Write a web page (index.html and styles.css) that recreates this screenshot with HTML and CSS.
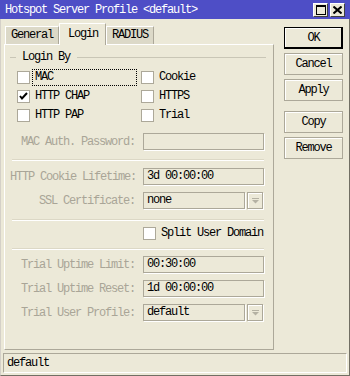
FILE: index.html
```html
<!DOCTYPE html>
<html>
<head>
<meta charset="utf-8">
<link rel="stylesheet" href="styles.css">
</head>
<body>
<div class="window">
  <div class="titlebar">
    <span class="title">Hotspot Server Profile &lt;default&gt;</span>
    <div class="tb-btns">
      <span class="tb-btn"><svg width="10" height="10" viewBox="0 0 10 10"><rect x="0.5" y="0.5" width="9" height="9" fill="none" stroke="#000"/><rect x="0" y="0" width="10" height="2" fill="#000"/></svg></span>
      <span class="tb-btn"><svg width="9" height="8" viewBox="0 0 9 8"><path d="M0.5 0.5 L8.5 7.5 M8.5 0.5 L0.5 7.5" stroke="#000" stroke-width="2" fill="none"/></svg></span>
    </div>
  </div>
  <div class="main">
    <div class="left">
      <div class="tabs">
        <div class="tab">General</div>
        <div class="tab active">Login</div>
        <div class="tab">RADIUS</div>
      </div>
      <div class="panel">
        <div class="group-title"><span class="gline short"></span><span class="gtext">Login By</span><span class="gline"></span></div>
        <div class="checks">
          <div class="check"><span class="box"></span><span class="clabel focus">MAC</span></div>
          <div class="check"><span class="box"></span><span class="clabel">Cookie</span></div>
          <div class="check"><span class="box"><svg width="11" height="11" viewBox="0 0 11 11"><path d="M2 5 L4 7.5 L9 2" stroke="#000" stroke-width="2" fill="none"/></svg></span><span class="clabel">HTTP CHAP</span></div>
          <div class="check"><span class="box"></span><span class="clabel">HTTPS</span></div>
          <div class="check"><span class="box"></span><span class="clabel">HTTP PAP</span></div>
          <div class="check"><span class="box"></span><span class="clabel">Trial</span></div>
        </div>
        <div class="row first"><span class="label">MAC Auth. Password:</span><span class="input"></span></div>
        <div class="sep"></div>
        <div class="row"><span class="label">HTTP Cookie Lifetime:</span><span class="input">3d 00:00:00</span></div>
        <div class="row"><span class="label">SSL Certificate:</span><span class="input select">none</span><span class="ddbtn"><svg width="7" height="6" viewBox="0 0 7 6"><rect x="0" y="0" width="7" height="1" fill="#b4b1a3"/><path d="M0 2 H7 L3.5 5.5 Z" fill="#b4b1a3"/></svg></span></div>
        <div class="sep s2"></div>
        <div class="split"><span class="box"></span><span class="clabel">Split User Domain</span></div>
        <div class="sep s3"></div>
        <div class="row trial"><span class="label">Trial Uptime Limit:</span><span class="input">00:30:00</span></div>
        <div class="row"><span class="label">Trial Uptime Reset:</span><span class="input">1d 00:00:00</span></div>
        <div class="row"><span class="label">Trial User Profile:</span><span class="input select">default</span><span class="ddbtn"><svg width="7" height="6" viewBox="0 0 7 6"><rect x="0" y="0" width="7" height="1" fill="#b4b1a3"/><path d="M0 2 H7 L3.5 5.5 Z" fill="#b4b1a3"/></svg></span></div>
      </div>
    </div>
    <div class="buttons">
      <div class="btn default">OK</div>
      <div class="btn">Cancel</div>
      <div class="btn">Apply</div>
      <div class="btn gap">Copy</div>
      <div class="btn">Remove</div>
    </div>
  </div>
  <div class="status">default</div>
</div>
</body>
</html>
```

FILE: styles.css
```css
* { box-sizing: border-box; }
html, body { margin: 0; padding: 0; }
body {
  width: 350px;
  height: 376px;
  background: #ece9d8;
  font-family: "Liberation Mono", "DejaVu Sans Mono", monospace;
  font-size: 12px;
  letter-spacing: -1.2px;
  color: #000;
  overflow: hidden;
}
.window {
  width: 350px;
  height: 376px;
  display: flex;
  flex-direction: column;
  border-right: 1px solid #716f64;
  border-bottom: 1px solid #716f64;
  border-left: 1px solid #d4d0c8;
  background: #ece9d8;
}
.titlebar {
  height: 19px;
  background: #4e4ec6;
  color: #fff;
  display: flex;
  align-items: center;
  padding-left: 5px;
  margin-left: -1px;
  margin-right: -1px;
}
.title { flex: 1; line-height: 19px; padding-top: 1px; }
.tb-btns { display: flex; gap: 2px; padding-right: 5px; }
.tb-btn {
  width: 15px;
  height: 14px;
  background: #ece9d8;
  border: 1px solid;
  border-color: #fff #404040 #404040 #fff;
  display: flex;
  align-items: center;
  justify-content: center;
}
.main {
  flex: 1;
  display: flex;
  padding: 4px 0 0 3px;
}
.left { width: 270px; display: flex; flex-direction: column; }
.tabs { display: flex; align-items: flex-end; height: 21px; padding-left: 1px; }
.tab {
  height: 18px;
  line-height: 16px;
  padding: 0 5px;
  background: #dcd9c8;
  border: 1px solid;
  border-color: #fff #aca899 transparent #fff;
  border-bottom: none;
}
.tab.active {
  height: 22px;
  margin-bottom: -1px;
  background: #ece9d8;
  padding: 2px 7px 0 8px;
  position: relative;
  z-index: 1;
  border-right-color: #aca899;
}
.panel {
  height: 306px;
  border: 1px solid;
  border-color: #fff #aca899 #aca899 #fff;
  padding: 6px 7px 0 5px;
}
.group-title {
  height: 12px;
  display: flex;
  align-items: center;
}
.gline { flex: 1; height: 1px; background: #c9c6b6; }
.gline.short { flex: 0 0 6px; }
.gtext { padding: 0 7px 0 6px; }
.checks {
  margin-top: 5px;
  display: grid;
  grid-template-columns: 124px 1fr;
  grid-auto-rows: 19px;
  padding-left: 7px;
}
.check { display: flex; align-items: center; }
.box {
  width: 13px;
  height: 13px;
  background: #fff;
  border: 1px solid #aca899;
  display: flex;
  align-items: center;
  justify-content: center;
  flex: none;
}
.clabel { margin-left: 5px; line-height: 15px; }
.clabel.focus {
  margin-left: 3px;
  padding-left: 2px;
  width: 103px;
  outline: 1px dotted #000;
}
.row {
  display: flex;
  align-items: center;
  height: 17px;
  margin-top: 7px;
}
.row.first { margin-top: 8px; }
.row.trial { margin-top: 6px; }
.label {
  width: 125px;
  text-align: right;
  color: #a9a597;
  margin-right: 8px;
  white-space: nowrap;
}
.input {
  width: 121px;
  height: 17px;
  border: 1px solid #aca899;
  box-shadow: 1px 1px 0 #fff;
  line-height: 15px;
  padding-left: 3px;
  white-space: nowrap;
}
.input.select { width: 102px; }
.ddbtn {
  width: 16px;
  height: 17px;
  margin-left: 2px;
  border: 1px solid #aca899;
  box-shadow: inset 1px 1px 0 #fff, 1px 1px 0 #fff;
  display: flex;
  align-items: center;
  justify-content: center;
}
.sep {
  height: 2px;
  margin: 9px 2px 5px 2px;
  border-top: 1px solid #dcd8c6;
  border-bottom: 1px solid #fff;
}
.sep.s2 { margin-top: 10px; margin-bottom: 6px; }
.sep.s3 { margin-top: 8px; margin-bottom: 0; }
.split { display: flex; align-items: center; height: 13px; padding-left: 133px; }
.split .clabel { margin-left: 5px; }
.buttons {
  width: 59px;
  margin-left: 10px;
  padding-top: 4px;
  display: flex;
  flex-direction: column;
  gap: 4px;
}
.btn {
  height: 22px;
  border: 1px solid #aca899;
  box-shadow: inset 1px 1px 0 #fff;
  display: flex;
  align-items: center;
  justify-content: center;
}
.btn.default {
  border: 1px solid #000;
  box-shadow: inset -1px -1px 0 #000, inset 1px 1px 0 #fff;
}
.btn.gap { margin-top: 6px; }
.status {
  height: 20px;
  margin: 1px 2px 2px 2px;
  border: 1px solid;
  border-color: #aca899 #fff #fff #aca899;
  padding-left: 3px;
  line-height: 18px;
}
```
